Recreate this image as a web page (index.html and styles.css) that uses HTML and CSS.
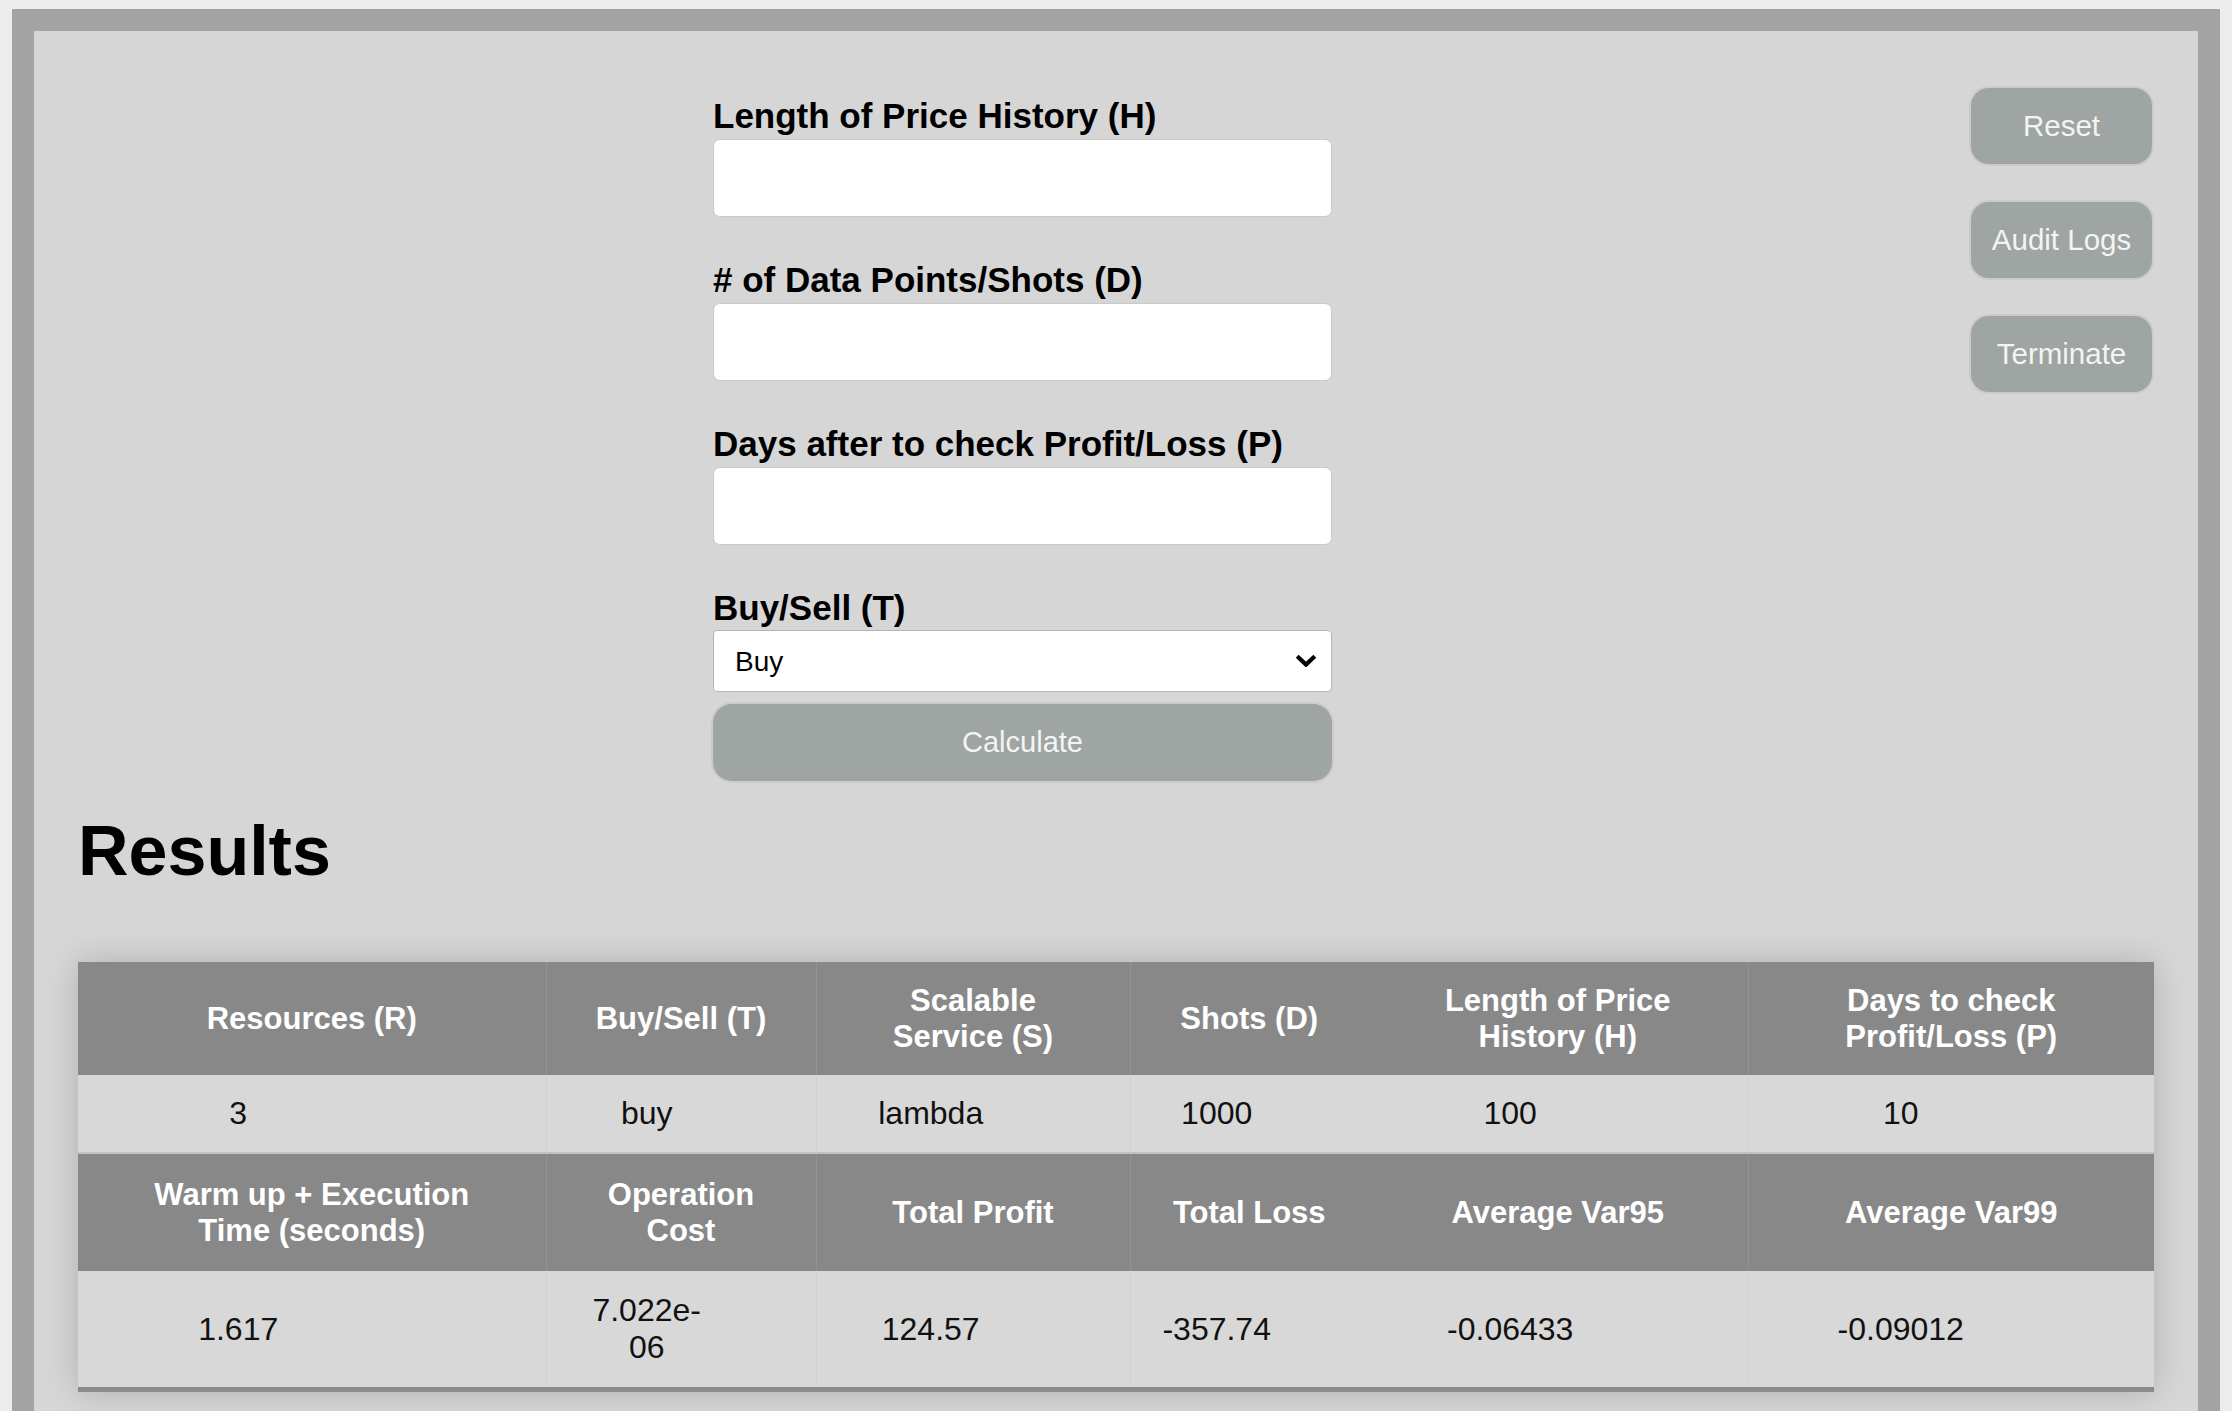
FILE: index.html
```html
<!DOCTYPE html>
<html lang="en">
<head>
<meta charset="utf-8">
<title>Risk Calculator</title>
<link rel="stylesheet" href="styles.css">
</head>
<body>
<div class="frame">
  <div class="top">
    <form class="form">
      <div class="field">
        <label class="field-label" for="h">Length of Price History (H)</label>
        <input class="field-input" id="h" type="text">
      </div>
      <div class="field">
        <label class="field-label" for="d"># of Data Points/Shots (D)</label>
        <input class="field-input" id="d" type="text">
      </div>
      <div class="field">
        <label class="field-label" for="p">Days after to check Profit/Loss (P)</label>
        <input class="field-input" id="p" type="text">
      </div>
      <div class="field">
        <label class="field-label" for="t">Buy/Sell (T)</label>
        <div class="select-wrap">
          <select class="field-select" id="t">
            <option>Buy</option>
            <option>Sell</option>
          </select>
          <svg class="chev" width="22" height="13" viewBox="0 0 22 13" aria-hidden="true">
            <path d="M2.2 2.2 L11 10.6 L19.8 2.2" fill="none" stroke="#000" stroke-width="4.2"/>
          </svg>
        </div>
      </div>
      <button class="calc" type="button">Calculate</button>
    </form>
    <div class="actions">
      <button class="side-btn" type="button">Reset</button>
      <button class="side-btn" type="button">Audit Logs</button>
      <button class="side-btn" type="button">Terminate</button>
    </div>
  </div>

  <section class="results">
    <h2 class="results-title">Results</h2>
    <table class="results-table">
      <colgroup>
        <col class="w1"><col class="w2"><col class="w3"><col class="w4"><col class="w5"><col class="w6">
      </colgroup>
      <tr class="head">
        <th>Resources (R)</th>
        <th>Buy/Sell (T)</th>
        <th>Scalable Service (S)</th>
        <th>Shots (D)</th>
        <th>Length of Price History (H)</th>
        <th>Days to check Profit/Loss (P)</th>
      </tr>
      <tr class="data">
        <td><span class="val">3</span></td>
        <td><span class="val">buy</span></td>
        <td><span class="val">lambda</span></td>
        <td><span class="val">1000</span></td>
        <td><span class="val">100</span></td>
        <td><span class="val">10</span></td>
      </tr>
      <tr class="head second">
        <th>Warm up + Execution Time (seconds)</th>
        <th>Operation Cost</th>
        <th>Total Profit</th>
        <th>Total Loss</th>
        <th>Average Var95</th>
        <th>Average Var99</th>
      </tr>
      <tr class="data last">
        <td><span class="val">1.617</span></td>
        <td><span class="val">7.022e-<wbr>06</span></td>
        <td><span class="val">124.57</span></td>
        <td><span class="val">-357.74</span></td>
        <td><span class="val">-0.06433</span></td>
        <td><span class="val">-0.09012</span></td>
      </tr>
    </table>
  </section>
</div>
</body>
</html>
```

FILE: styles.css
```css
html, body {
  margin: 0;
  padding: 0;
}

body {
  background: #ececec;
  font-family: "Liberation Sans", Arial, sans-serif;
  color: #000;
}

.frame {
  margin: 9px 12px 0;
  border: 22px solid #a3a3a3;
  border-bottom: none;
  background: #d6d6d6;
}

.top {
  display: grid;
  grid-template-columns: 679px 619px 1fr;
  padding-top: 57px;
}

.form {
  grid-column: 2;
  padding-top: 8px;
  display: flex;
  flex-direction: column;
}

.field + .field {
  margin-top: 43px;
}

.field-label {
  display: block;
  font-size: 35px;
  font-weight: bold;
  line-height: 40px;
}

.field-input {
  display: block;
  box-sizing: border-box;
  width: 100%;
  height: 78px;
  margin-top: 3px;
  border: 1px solid #cacaca;
  border-radius: 7px;
  background: #fff;
  font-family: "Liberation Sans", Arial, sans-serif;
  font-size: 28px;
  padding: 0 16px;
  outline: none;
}

.select-wrap {
  position: relative;
  margin-top: 2px;
}

.field-select {
  display: block;
  box-sizing: border-box;
  width: 100%;
  height: 62px;
  border: 1px solid #b5b5b5;
  border-radius: 4px;
  background: #fff;
  font-family: "Liberation Sans", Arial, sans-serif;
  font-size: 28px;
  color: #000;
  padding: 0 21px;
  -webkit-appearance: none;
  appearance: none;
  outline: none;
}

.chev {
  position: absolute;
  right: 15px;
  top: 24px;
  pointer-events: none;
}

.calc {
  margin-top: 12px;
  height: 77px;
  width: 100%;
  border: none;
  border-radius: 19px;
  background: #9ea5a2;
  box-shadow: 0 0 0 2px #cbcbcb;
  color: #f4f4f4;
  font-family: "Liberation Sans", Arial, sans-serif;
  font-size: 29px;
}

.actions {
  grid-column: 3;
  justify-self: end;
  margin-right: 46px;
  display: flex;
  flex-direction: column;
  gap: 38px;
}

.side-btn {
  width: 181px;
  height: 76px;
  border: none;
  border-radius: 18px;
  background: #9ea5a2;
  box-shadow: 0 0 0 2px #cbcbcb;
  color: #f4f4f4;
  font-family: "Liberation Sans", Arial, sans-serif;
  font-size: 29.5px;
}

.results {
  padding: 0 44px 80px;
}

.results-title {
  margin: 30px 0 71px;
  font-size: 70px;
  font-weight: bold;
  line-height: 80px;
}

.results-table {
  width: 100%;
  table-layout: fixed;
  border-collapse: collapse;
  box-shadow: 0 0 30px rgba(0, 0, 0, 0.18);
  border-bottom: 5px solid #8b8b8b;
}

.w1 { width: 468px; }
.w2 { width: 270px; }
.w3 { width: 314px; }
.w4 { width: 238px; }
.w5 { width: 380px; }
.w6 { width: 406px; }

.head th {
  background: #888888;
  color: #fff;
  font-size: 31px;
  font-weight: bold;
  line-height: 35.6px;
  padding: 21px 38px;
  text-align: center;
  vertical-align: middle;
  border-right: 1px solid #939393;
}

.head.second th {
  padding-top: 23px;
  padding-bottom: 23px;
}

.head th:nth-child(4),
.head th:last-child {
  border-right: none;
}

.data td {
  background: #d8d8d8;
  color: #111;
  font-size: 32px;
  line-height: 36.8px;
  padding: 20px 0;
  vertical-align: middle;
  text-align: left;
  border-bottom: 2px solid #c2c2c2;
  border-right: 1px solid #d0d0d0;
}

.data td:nth-child(4),
.data td:last-child {
  border-right: none;
}

.data.last td {
  padding-top: 21px;
  padding-bottom: 21px;
  border-bottom: 5px solid #8b8b8b;
}

.val {
  display: block;
  width: 4.2em;
  text-align: center;
}

.data td:nth-child(1) .val { margin-left: 93px; }
.data td:nth-child(2) .val { margin-left: 33px; }
.data td:nth-child(3) .val { margin-left: 47px; }
.data td:nth-child(4) .val { margin-left: 19px; }
.data td:nth-child(5) .val { margin-left: 75px; }
.data td:nth-child(6) .val { margin-left: 85px; }
```
